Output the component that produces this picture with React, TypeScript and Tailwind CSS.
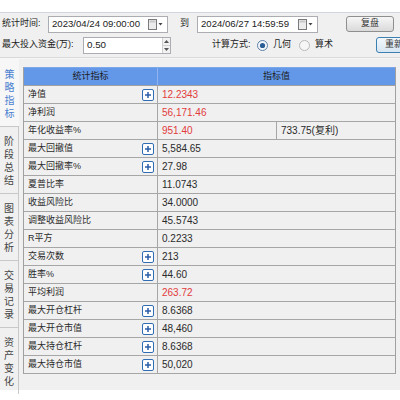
import React from "react";

type Row = { l: string; v: string; plus?: boolean; red?: boolean; v2?: string };

const rows: Row[] = [
  { l: "净值", plus: true, v: "12.2343", red: true },
  { l: "净利润", v: "56,171.46", red: true },
  { l: "年化收益率%", v: "951.40", red: true, v2: "733.75(复利)" },
  { l: "最大回撤值", plus: true, v: "5,584.65" },
  { l: "最大回撤率%", plus: true, v: "27.98" },
  { l: "夏普比率", v: "11.0743" },
  { l: "收益风险比", v: "34.0000" },
  { l: "调整收益风险比", v: "45.5743" },
  { l: "R平方", v: "0.2233" },
  { l: "交易次数", plus: true, v: "213" },
  { l: "胜率%", plus: true, v: "44.60" },
  { l: "平均利润", v: "263.72", red: true },
  { l: "最大开仓杠杆", plus: true, v: "8.6368" },
  { l: "最大开仓市值", plus: true, v: "48,460" },
  { l: "最大持仓杠杆", plus: true, v: "8.6368" },
  { l: "最大持仓市值", plus: true, v: "50,020" },
];

const tabs = ["策略指标", "阶段总结", "图表分析", "交易记录", "资产变化"];

function CalIcon() {
  return (
    <svg width="16" height="11" viewBox="0 0 16 11" className="shrink-0">
      <rect x="0.5" y="0.5" width="8" height="10" fill="#ececec" stroke="#7a7a7a" />
      <rect x="1.5" y="1.5" width="6" height="2" fill="#c8c8c8" />
      <path d="M10.5 4 L14.5 4 L12.5 6.5 Z" fill="#444" />
    </svg>
  );
}

function Spinner() {
  return (
    <div className="flex flex-col w-[8px] h-[15px] shrink-0 border-l border-[#d0d0d0] bg-[#f2f2f2]">
      <div className="flex-1 flex items-center justify-center border-b border-[#d0d0d0]">
        <svg width="5" height="3" viewBox="0 0 5 3"><path d="M0 3 L2.5 0 L5 3 Z" fill="#555" /></svg>
      </div>
      <div className="flex-1 flex items-center justify-center">
        <svg width="5" height="3" viewBox="0 0 5 3"><path d="M0 0 L2.5 3 L5 0 Z" fill="#555" /></svg>
      </div>
    </div>
  );
}

function Plus() {
  return (
    <svg width="12" height="12" viewBox="0 0 12 12" className="shrink-0">
      <rect x="0.5" y="0.5" width="11" height="11" rx="1.5" fill="#ffffff" stroke="#2f6db5" />
      <path d="M3 6 H9 M6 3 V9" stroke="#2a5ea8" strokeWidth="1.5" />
    </svg>
  );
}

function Radio({ on }: { on?: boolean }) {
  return (
    <svg width="11" height="11" viewBox="0 0 11 11" className="shrink-0">
      <circle cx="5.5" cy="5.5" r="5" fill={on ? "#f4f8fc" : "#f6f6f6"} stroke={on ? "#5a7fa8" : "#b8b8b8"} />
      {on && <circle cx="5.5" cy="5.5" r="2.6" fill="#2a5c95" />}
    </svg>
  );
}

export default function App() {
  return (
    <div
      className="w-[400px] h-[400px] overflow-hidden bg-white text-[9px] text-[#222] whitespace-nowrap"
      style={{ fontFamily: '"Liberation Sans", "Noto Sans CJK SC", sans-serif' }}
    >
      <div className="h-[13px] shrink-0 bg-white border-b border-[#cfd6e0]" />
      <div className="h-[377px] bg-[#f0f0f0] flex flex-col">
        {/* row 1 */}
        <div className="h-[22px] shrink-0 flex items-center pl-[2px]">
          <div className="w-[46px] shrink-0">统计时间:</div>
          <div className="w-[120px] h-[17px] shrink-0 bg-white border border-[#abadb3] flex items-center pl-[3px] pr-[3px] text-[9.6px]">
            <span className="flex-1">2023/04/24 09:00:00</span>
            <CalIcon />
          </div>
          <div className="ml-[12px] w-[12px] shrink-0">到</div>
          <div className="ml-[5px] w-[121px] h-[17px] shrink-0 bg-white border border-[#abadb3] flex items-center pl-[3px] pr-[3px] text-[9.6px]">
            <span className="flex-1">2024/06/27 14:59:59</span>
            <CalIcon />
          </div>
          <div className="ml-[28px] w-[48px] h-[16px] shrink-0 rounded-[3px] border border-[#8e8f8f] bg-gradient-to-b from-[#f6f6f6] to-[#dadada] flex items-center justify-center text-[#333]">
            复盘
          </div>
        </div>
        {/* row 2 */}
        <div className="h-[20px] shrink-0 flex items-center pl-[2px]">
          <div className="w-[81px] shrink-0">最大投入资金(万):</div>
          <div className="w-[88px] h-[17px] shrink-0 bg-white border border-[#abadb3] flex items-center pl-[3px] text-[9.8px]">
            <span className="flex-1">0.50</span>
            <Spinner />
          </div>
          <div className="ml-[41px] w-[45px] shrink-0">计算方式:</div>
          <Radio on />
          <div className="ml-[5px] w-[24px] shrink-0">几何</div>
          <div className="ml-[2px] shrink-0"><Radio /></div>
          <div className="ml-[5px] w-[24px] shrink-0">算术</div>
          <div className="ml-[37px] w-[40px] h-[16px] shrink-0 rounded-[3px] border border-[#3c7fb1] bg-gradient-to-b from-[#f2f8fc] to-[#d6e6f2] flex items-center pl-[8px] overflow-hidden text-[#333]">
            重新计算
          </div>
        </div>
        <div className="mt-[2px] h-[2px] shrink-0 border-t border-[#d9d9d9] bg-[#f7f7f7]" />
        {/* main */}
        <div className="flex flex-1 min-h-0">
          <div className="w-[19px] shrink-0 flex flex-col">
            {tabs.map((t, i) => (
              <div
                key={t}
                className={
                  "h-[67px] shrink-0 flex flex-col items-center justify-center text-[10px] leading-[13px] " +
                  (i === 0
                    ? "bg-[#f7f7f7] text-[#4a7fd0]"
                    : "border-r border-t border-[#c8c8c8] text-[#444]")
                }
                style={{ fontFamily: '"Noto Sans CJK SC", sans-serif' }}
              >
                {t.split("").map((c, j) => (
                  <span key={j} className="block h-[13px] leading-[13px]">{c}</span>
                ))}
              </div>
            ))}
            <div className="flex-1 border-r border-[#c8c8c8]" />
          </div>
          <div className="ml-[4px] pt-[8px] shrink-0">
            <div className="w-[373px] border-l border-r border-[#a0a0a0]">
              <div className="h-[19px] flex bg-[#6398e8] border-b border-[#a0a0a0] border-t border-t-[#7aa6ea]">
                <div className="w-[134px] border-r border-[#8fb4ef] flex items-center justify-center text-[#1a1a1a]">统计指标</div>
                <div className="flex-1 flex items-center justify-center text-[#1a1a1a]">指标值</div>
              </div>
              {rows.map((r) => (
                <div key={r.l} className="h-[18px] flex border-b border-[#a6a6a6] bg-[#f0f0f0]">
                  <div className="w-[134px] border-r border-[#a6a6a6] flex items-center pl-[4px] pr-[3px] text-[#2a2a2a]">
                    <span className="flex-1">{r.l}</span>
                    {r.plus && <Plus />}
                  </div>
                  <div className={"w-[119px] flex items-center pl-[4px] text-[10px] " + (r.v2 ? "border-r border-[#a6a6a6] " : "") + (r.red ? "text-[#e23b3b]" : "text-[#2a2a2a]")}>
                    {r.v}
                  </div>
                  <div className="flex-1 flex items-center pl-[4px] text-[10px] text-[#2a2a2a]">{r.v2 ?? ""}</div>
                </div>
              ))}
            </div>
          </div>
        </div>
      </div>
    </div>
  );
}
